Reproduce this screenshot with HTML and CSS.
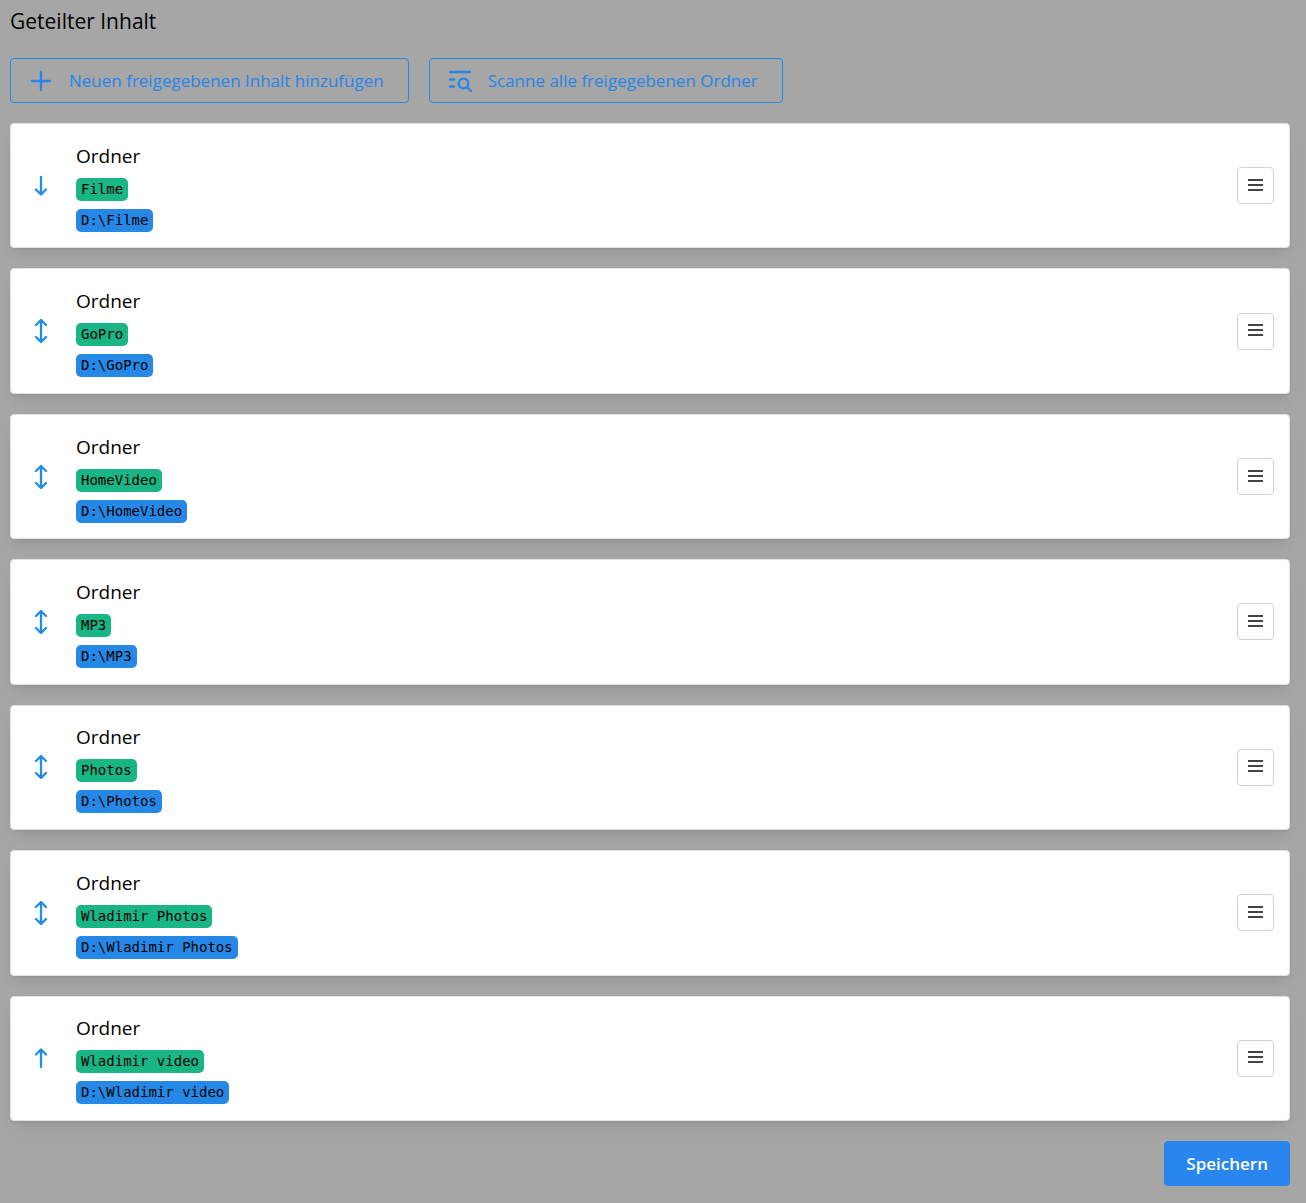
FILE: index.html
```html
<!DOCTYPE html>
<html lang="de">
<head>
  <meta charset="UTF-8">
  <title>Geteilter Inhalt</title>
  <meta name="viewport" content="width=device-width, initial-scale=1">
  <link rel="stylesheet" href="styles.css">
</head>
<body>
  <!-- icon shapes used by the buttons and rows -->
  <svg class="sprite" aria-hidden="true">
    <symbol id="plus" viewBox="0 0 24 24"><path d="M12 3v18M3 12h18"/></symbol>
    <symbol id="scan" viewBox="0 0 24 24"><path d="M2 3h20M2 10.500h4M2 17.500h4M19 18l4 4"/><circle cx="15.500" cy="14.500" r="4.800"/></symbol>
    <symbol id="down" viewBox="0 0 24 24"><path d="M12 3v17M7 15.500l5 5 5-5"/></symbol>
    <symbol id="up" viewBox="0 0 24 24"><path d="M12 21V4M7 8.500l5-5 5 5"/></symbol>
    <symbol id="both" viewBox="0 0 24 24"><path d="M12 2v20M7 6l5-5 5 5M7 18l5 5 5-5"/></symbol>
    <symbol id="menu" viewBox="0 0 16 16"><path d="M0 2h15M0 7h15M0 12h15"/></symbol>
  </svg>

  <form class="page">
    <h1 class="title">Geteilter Inhalt</h1>

    <div class="actions">
      <button type="button" class="btn outline">
        <svg class="icon" aria-hidden="true"><use href="#plus"/></svg>
        Neuen freigegebenen Inhalt hinzufügen
      </button>
      <button type="button" class="btn outline">
        <svg class="icon" aria-hidden="true"><use href="#scan"/></svg>
        Scanne alle freigegebenen Ordner
      </button>
    </div>

    <ul class="list">
      <li class="card">
        <svg class="icon handle" aria-hidden="true"><use href="#down"/></svg>
        <div class="info">
          <span class="type">Ordner</span>
          <div class="line"><code class="tag name">Filme</code></div>
          <div class="line"><code class="tag path">D:\Filme</code></div>
        </div>
        <button type="button" class="menu" aria-label="Menü"><svg class="bars" aria-hidden="true"><use href="#menu"/></svg></button>
      </li>
      <li class="card">
        <svg class="icon handle" aria-hidden="true"><use href="#both"/></svg>
        <div class="info">
          <span class="type">Ordner</span>
          <div class="line"><code class="tag name">GoPro</code></div>
          <div class="line"><code class="tag path">D:\GoPro</code></div>
        </div>
        <button type="button" class="menu" aria-label="Menü"><svg class="bars" aria-hidden="true"><use href="#menu"/></svg></button>
      </li>
      <li class="card">
        <svg class="icon handle" aria-hidden="true"><use href="#both"/></svg>
        <div class="info">
          <span class="type">Ordner</span>
          <div class="line"><code class="tag name">HomeVideo</code></div>
          <div class="line"><code class="tag path">D:\HomeVideo</code></div>
        </div>
        <button type="button" class="menu" aria-label="Menü"><svg class="bars" aria-hidden="true"><use href="#menu"/></svg></button>
      </li>
      <li class="card">
        <svg class="icon handle" aria-hidden="true"><use href="#both"/></svg>
        <div class="info">
          <span class="type">Ordner</span>
          <div class="line"><code class="tag name">MP3</code></div>
          <div class="line"><code class="tag path">D:\MP3</code></div>
        </div>
        <button type="button" class="menu" aria-label="Menü"><svg class="bars" aria-hidden="true"><use href="#menu"/></svg></button>
      </li>
      <li class="card">
        <svg class="icon handle" aria-hidden="true"><use href="#both"/></svg>
        <div class="info">
          <span class="type">Ordner</span>
          <div class="line"><code class="tag name">Photos</code></div>
          <div class="line"><code class="tag path">D:\Photos</code></div>
        </div>
        <button type="button" class="menu" aria-label="Menü"><svg class="bars" aria-hidden="true"><use href="#menu"/></svg></button>
      </li>
      <li class="card">
        <svg class="icon handle" aria-hidden="true"><use href="#both"/></svg>
        <div class="info">
          <span class="type">Ordner</span>
          <div class="line"><code class="tag name">Wladimir Photos</code></div>
          <div class="line"><code class="tag path">D:\Wladimir Photos</code></div>
        </div>
        <button type="button" class="menu" aria-label="Menü"><svg class="bars" aria-hidden="true"><use href="#menu"/></svg></button>
      </li>
      <li class="card">
        <svg class="icon handle" aria-hidden="true"><use href="#up"/></svg>
        <div class="info">
          <span class="type">Ordner</span>
          <div class="line"><code class="tag name">Wladimir video</code></div>
          <div class="line"><code class="tag path">D:\Wladimir video</code></div>
        </div>
        <button type="button" class="menu" aria-label="Menü"><svg class="bars" aria-hidden="true"><use href="#menu"/></svg></button>
      </li>
    </ul>

    <div class="footer">
      <button type="submit" class="btn primary">Speichern</button>
    </div>
  </form>
</body>
</html>
```
FILE: styles.css
```css
* {
  box-sizing: border-box;
}
body {
  margin: 0;
  background: #a6a6a6;
  color: #000;
  font-family: "Segoe UI", "Open Sans", sans-serif;
}
.sprite {
  display: none;
}
svg {
  fill: none;
  stroke: currentColor;
  stroke-width: 2.3;
  stroke-linecap: round;
  stroke-linejoin: round;
}
.page {
  display: flex;
  flex-direction: column;
  gap: 20px;
  min-height: 100vh;
  padding: 4px 16px 17px 10px;
}
.title {
  margin: 0;
  font-size: 21px;
  font-weight: 400;
  line-height: 34px;
}
.actions {
  display: flex;
  flex-wrap: wrap;
  gap: 20px;
}
.btn {
  display: flex;
  align-items: center;
  gap: 16px;
  height: 45px;
  padding: 0 24px 0 18px;
  border: 1px solid #228be6;
  border-radius: 4px;
  font-family: inherit;
  font-size: 17px;
  font-weight: 500;
  cursor: pointer;
}
.outline {
  background: transparent;
  color: #2585e8;
}
.primary {
  padding: 0 21px;
  background: #2886ee;
  border-color: #2886ee;
  color: #fff;
  font-weight: 600;
}
.icon {
  width: 24px;
  height: 24px;
  flex: none;
}
.list {
  display: flex;
  flex-direction: column;
  flex: 1;
  gap: 20px;
  margin: 0;
  padding: 0;
  list-style: none;
}
.card {
  display: flex;
  align-items: center;
  flex: 1;
  padding: 10px 15px;
  background: #fff;
  border: 1px solid #dee2e6;
  border-radius: 4px;
  box-shadow: 0 1px 3px rgba(0, 0, 0, 0.05), 0 10px 15px -5px rgba(0, 0, 0, 0.08), 0 7px 7px -5px rgba(0, 0, 0, 0.04);
}
.handle {
  margin: 0 23px 0 3px;
  color: #228be6;
}
.info {
  flex: 1;
  padding-top: 5px;
}
.type {
  display: block;
  margin-bottom: 2px;
  font-size: 19px;
  line-height: 31px;
}
.line {
  display: flex;
  align-items: center;
  height: 31px;
}
.tag {
  padding: 0 5px;
  border-radius: 5px;
  font-family: Consolas, "DejaVu Sans Mono", monospace;
  font-size: 14px;
  line-height: 23px;
}
.name {
  background: #19b585;
}
.path {
  background: #2588e6;
}
.menu {
  display: flex;
  align-items: center;
  justify-content: center;
  width: 37px;
  height: 37px;
  padding: 0;
  background: #fff;
  border: 1px solid #ced4da;
  border-radius: 4px;
  color: #444;
  cursor: pointer;
}
.bars {
  width: 16px;
  height: 16px;
  stroke-width: 2;
  stroke-linecap: butt;
}
.footer {
  display: flex;
  justify-content: flex-end;
}
```
